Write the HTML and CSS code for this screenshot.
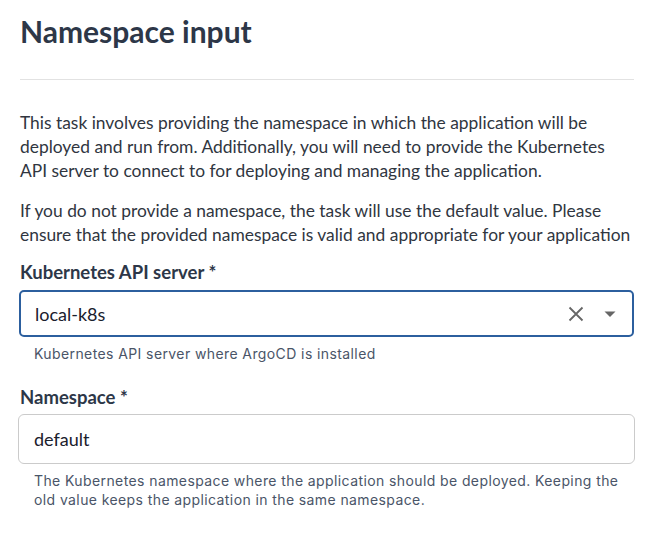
FILE: index.html
```html
<!DOCTYPE html>
<html>
<head>
<meta charset="utf-8">
<link rel="stylesheet" href="styles.css">
</head>
<body>
<div class="page">
  <h1 class="title">Namespace input</h1>
  <hr class="divider">
  <p class="desc">This task involves providing the namespace in which the application will be deployed and run from. Additionally, you will need to provide the Kubernetes API server to connect to for deploying and managing the application.</p>
  <p class="desc desc-2">If you do not provide a namespace, the task will use the default value. Please ensure that the provided namespace is valid and appropriate for your application</p>

  <div class="field field-first">
    <label class="label">Kubernetes API server *</label>
    <div class="control select">
      <span class="value">local-k8s</span>
      <span class="icons">
        <svg class="clear" width="16" height="16" viewBox="0 0 16 16"><path d="M1.5 1.5 L14.5 14.5 M14.5 1.5 L1.5 14.5" stroke="#666" stroke-width="1.8" fill="none"/></svg>
        <svg class="caret" width="12" height="6" viewBox="0 0 12 6"><path d="M0.5 0.5 L11.5 0.5 L6 6 Z" fill="#666"/></svg>
      </span>
    </div>
    <div class="help">Kubernetes API server where ArgoCD is installed</div>
  </div>

  <div class="field field-second">
    <label class="label">Namespace *</label>
    <div class="control input">
      <span class="value">default</span>
    </div>
    <div class="help">The Kubernetes namespace where the application should be deployed. Keeping the old value keeps the application in the same namespace.</div>
  </div>
</div>
</body>
</html>
```

FILE: styles.css
```css
html, body {
  margin: 0;
  padding: 0;
  background: #ffffff;
}
body {
  font-family: Lato, "Liberation Sans", sans-serif;
  color: #2d3748;
}
.page {
  padding: 13px 19px 0 19px;
  width: 615px;
}
.title {
  margin: 0 0 0 1px;
  font-size: 30px;
  font-weight: 700;
  line-height: 36px;
  color: #2d3748;
}
.divider {
  border: none;
  border-top: 1px solid #e2e2e2;
  margin: 30px 0 0 1px;
  height: 0;
}
.desc {
  margin: 31px 0 0 1px;
  font-size: 17.4px;
  line-height: 24px;
  color: #30363f;
}
.desc-2 {
  margin-top: 16px;
}
.field {
  display: flex;
  flex-direction: column;
}
.field-first {
  margin-top: 13px;
}
.field-second {
  margin-top: 22px;
}
.label {
  font-size: 18.5px;
  font-weight: 700;
  line-height: 24px;
  color: #2d3748;
  margin-left: 1px;
}
.control {
  display: flex;
  align-items: center;
  box-sizing: border-box;
  padding: 0 14px;
  font-size: 18px;
  color: #1a202c;
}
.select {
  margin-top: 6px;
  border: 2px solid #2c5f9e;
  border-radius: 5px;
  height: 47px;
  width: 615px;
  padding-right: 16px;
}
.input {
  margin-top: 5px;
  border: 1px solid #cbcbcb;
  border-radius: 6px;
  height: 50px;
  padding-left: 15px;
  width: 617px;
  margin-left: -1px;
}
.value {
  flex: 1;
}
.icons {
  display: flex;
  align-items: center;
  gap: 20px;
}
.help {
  margin: 7px 0 0 15px;
  font-family: Inter, "Noto Sans", sans-serif;
  font-size: 14px;
  line-height: 19px;
  letter-spacing: 0.4px;
  color: #4a5568;
}
```
